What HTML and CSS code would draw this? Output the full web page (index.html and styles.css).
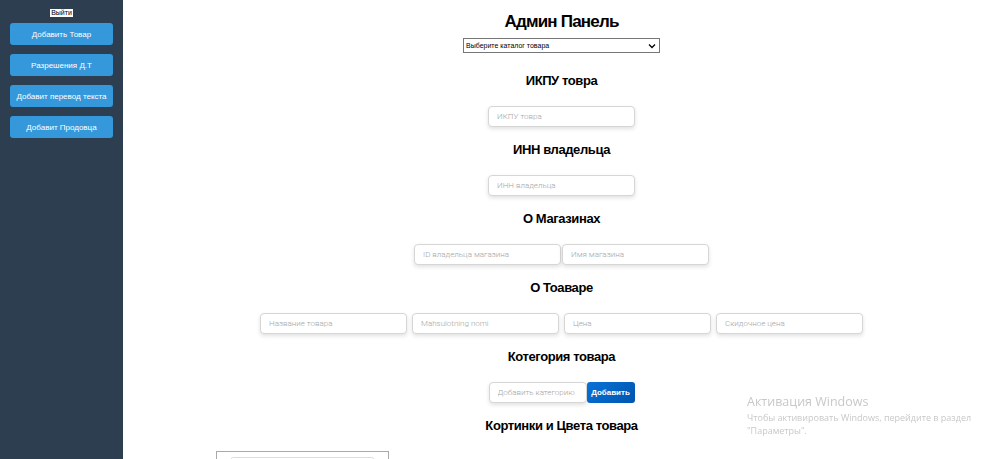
FILE: index.html
```html
<!DOCTYPE html>
<html lang="ru">
<head>
  <meta charset="UTF-8">
  <meta name="viewport" content="width=device-width, initial-scale=1.0">
  <title>Админ Панель</title>
  <link rel="stylesheet" href="styles.css">
</head>
<body>
  <div class="layout">
    <aside class="sidebar">
      <a class="logout" href="#">Выйти</a>
      <button class="side-btn">Добавить Товар</button>
      <button class="side-btn">Разрешения Д.Т</button>
      <button class="side-btn">Добавит перевод текста</button>
      <button class="side-btn">Добавит Продовца</button>
    </aside>

    <main class="content">
      <h1 class="title">Админ Панель</h1>
      <div class="select-wrap">
        <select class="catalog">
          <option>Выберите каталог товара</option>
        </select>
        <svg class="chevron" width="8" height="6" viewBox="0 0 8 6">
          <path d="M1 1.5 L4 4.5 L7 1.5" fill="none" stroke="#000" stroke-width="1.3"/>
        </svg>
      </div>

      <section class="block">
        <h3>ИКПУ товра</h3>
        <div class="row">
          <input class="field" type="text" placeholder="ИКПУ товра">
        </div>
      </section>

      <section class="block">
        <h3>ИНН владельца</h3>
        <div class="row">
          <input class="field" type="text" placeholder="ИНН владельца">
        </div>
      </section>

      <section class="block">
        <h3>О Магазинах</h3>
        <div class="row row-tight">
          <input class="field" type="text" placeholder="ID владельца магазина">
          <input class="field" type="text" placeholder="Имя магазина">
        </div>
      </section>

      <section class="block">
        <h3>О Тоаваре</h3>
        <div class="row row-wide">
          <input class="field" type="text" placeholder="Название товара">
          <input class="field" type="text" placeholder="Mahsulotning nomi">
          <input class="field" type="text" placeholder="Цена">
          <input class="field" type="text" placeholder="Скидочное цена">
        </div>
      </section>

      <section class="block">
        <h3>Котегория товара</h3>
        <div class="row row-join">
          <input class="field field-short" type="text" placeholder="Добавить категорию">
          <button class="add-btn">Добавить</button>
        </div>
      </section>

      <section class="block">
        <h3>Кортинки и Цвета товара</h3>
        <div class="images">
          <div class="image-box">
            <div class="image-inner"></div>
          </div>
        </div>
      </section>
    </main>
  </div>

  <div class="activation">
    <div class="act-title">Активация Windows</div>
    <div class="act-text">Чтобы активировать Windows, перейдите в раздел<br>"Параметры".</div>
  </div>
</body>
</html>
```

FILE: styles.css
```css
* {
  margin: 0;
  padding: 0;
  box-sizing: border-box;
}
body {
  font-family: 'Liberation Sans', Arial, sans-serif;
  background: #fff;
  color: #000;
  overflow: hidden;
}
.layout {
  display: flex;
  height: 100vh;
}
.sidebar {
  width: 123px;
  flex-shrink: 0;
  background: #2c3e50;
  padding: 9px 10px;
  display: flex;
  flex-direction: column;
  align-items: center;
  gap: 9px;
}
.logout {
  background: #fff;
  color: #000;
  font-size: 7px;
  line-height: 8px;
  text-decoration: none;
  padding: 0 1px;
  margin-bottom: -3px;
}
.side-btn {
  width: 100%;
  height: 22px;
  background: #3498db;
  color: #fff;
  border: none;
  border-radius: 3px;
  font-family: inherit;
  font-size: 8px;
  cursor: pointer;
}
.content {
  flex: 1;
  display: flex;
  flex-direction: column;
  align-items: center;
  padding-top: 10px;
}
.title {
  font-size: 17px;
  letter-spacing: -0.8px;
  line-height: 24px;
  font-weight: bold;
  margin-bottom: 4px;
}
.select-wrap {
  position: relative;
  width: 197px;
  height: 15px;
  margin-bottom: 19px;
}
.catalog {
  display: block;
  width: 100%;
  height: 15px;
  appearance: none;
  -webkit-appearance: none;
  font-family: inherit;
  font-size: 7px;
  line-height: 13px;
  padding: 0 2px;
  border: 1px solid #767676;
  border-radius: 0;
  background: #fff;
  color: #000;
}
.chevron {
  position: absolute;
  right: 4px;
  top: 5px;
  pointer-events: none;
}
.block {
  width: 100%;
  display: flex;
  flex-direction: column;
  align-items: center;
}
.block h3 {
  font-size: 13px;
  letter-spacing: -0.4px;
  line-height: 18px;
  margin-bottom: 16px;
}
.row {
  display: flex;
  justify-content: center;
  margin-bottom: 14px;
}
.row-tight {
  gap: 1px;
}
.row-wide {
  gap: 5px;
}
.field {
  width: 147px;
  height: 21px;
  border: 1px solid #d6d6d6;
  border-radius: 4px;
  box-shadow: 0 2px 4px rgba(0, 0, 0, 0.12);
  padding: 0 8px;
  font-family: 'Roboto', sans-serif;
  font-size: 8px;
  font-weight: 300;
  color: #333;
  outline: none;
}
.field::placeholder {
  color: #a4a4a4;
}
.field-short {
  width: 98px;
}
.add-btn {
  width: 48px;
  height: 21px;
  border: none;
  border-radius: 3px;
  background: linear-gradient(135deg, #0a72d6, #0055b0);
  color: #fff;
  font-family: inherit;
  font-size: 8px;
  font-weight: bold;
  cursor: pointer;
}
.images {
  width: 100%;
  padding-left: 93px;
}
.image-box {
  width: 173px;
  height: 40px;
  border: 1px solid #aaa;
  border-bottom: none;
  padding: 5px 12px 0;
}
.image-inner {
  height: 30px;
  border: 1px solid #ddd;
  border-radius: 5px;
}
.activation {
  position: fixed;
  left: 747px;
  top: 393px;
  color: #c8c8c8;
  font-family: 'Open Sans', 'Noto Sans', sans-serif;
  pointer-events: none;
}
.act-title {
  font-size: 12.5px;
  line-height: 18px;
}
.act-text {
  font-size: 9px;
  line-height: 13px;
}
```
